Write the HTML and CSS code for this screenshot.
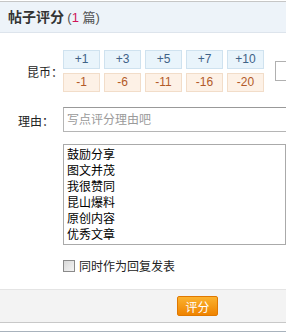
FILE: index.html
```html
<!DOCTYPE html>
<html lang="zh-CN">
<head>
    <meta charset="UTF-8">
    <title>帖子评分</title>
    <link rel="stylesheet" href="styles.css">
</head>
<body>
    <div class="dialog">
        <div class="hd">
            <b>帖子评分</b> <span class="count">(<em>1</em> 篇)</span>
        </div>
        <div class="bd">
            <div class="row row-score">
                <label class="lbl lbl-score">昆币：</label>
                <div class="scores">
                    <span class="sc plus">+1</span>
                    <span class="sc plus">+3</span>
                    <span class="sc plus">+5</span>
                    <span class="sc plus">+7</span>
                    <span class="sc plus">+10</span>
                    <span class="sc minus">-1</span>
                    <span class="sc minus">-6</span>
                    <span class="sc minus">-11</span>
                    <span class="sc minus">-16</span>
                    <span class="sc minus">-20</span>
                </div>
                <input type="text" class="custom">
            </div>
            <div class="row row-reason">
                <label class="lbl lbl-reason">理由：</label>
                <input type="text" class="reason" placeholder="写点评分理由吧">
            </div>
            <div class="row">
                <div class="reasons">
                    <div>鼓励分享</div>
                    <div>图文并茂</div>
                    <div>我很赞同</div>
                    <div>昆山爆料</div>
                    <div>原创内容</div>
                    <div>优秀文章</div>
                </div>
            </div>
            <div class="row row-check">
                <label class="check"><span class="box"></span>同时作为回复发表</label>
            </div>
        </div>
        <div class="ft">
            <button class="btn">评分</button>
        </div>
        <div class="bottom"></div>
    </div>
</body>
</html>
```

FILE: styles.css
```css
body {
    margin: 0;
    font-family: "Liberation Sans", "Noto Sans CJK SC", sans-serif;
    font-size: 12px;
    color: #000;
    background: #fff;
    overflow: hidden;
}
.dialog {
    padding-top: 1px;
    overflow: hidden;
}
.hd {
    height: 30px;
    line-height: 30px;
    padding-left: 8px;
    border-top: 1px solid #c6c6c6;
    border-bottom: 1px solid #dde4ec;
    background: #edf3f9;
    color: #333;
}
.hd b {
    font-size: 14px;
}
.count {
    font-size: 13px;
    color: #555;
}
.count em {
    font-style: normal;
    color: #d0145a;
}
.bd {
    padding: 17px 0 15px 63px;
}
.row {
    display: flex;
    align-items: center;
    position: relative;
}
.lbl {
    position: absolute;
    top: 50%;
    transform: translateY(-50%);
    color: #222;
}
.lbl-score {
    left: -36px;
}
.lbl-reason {
    left: -45px;
}
.scores {
    display: grid;
    flex-shrink: 0;
    grid-template-columns: repeat(5, 37px);
    grid-auto-rows: 19px;
    column-gap: 4px;
    row-gap: 4px;
}
.sc {
    box-sizing: border-box;
    text-align: center;
    line-height: 17px;
    font-size: 12px;
}
.plus {
    background: #e9f4fb;
    border: 1px solid #cfe2ef;
    color: #3f6286;
}
.minus {
    background: #fdf1e6;
    border: 1px solid #f2ddc9;
    color: #b25a28;
}
.custom {
    flex-shrink: 0;
    margin-left: 11px;
    width: 40px;
    height: 20px;
    box-sizing: border-box;
    border: 1px solid #b0b0b0;
    padding: 0;
}
.row-reason {
    margin-top: 15px;
}
.reason {
    flex-shrink: 0;
    width: 300px;
    height: 25px;
    box-sizing: border-box;
    border: 1px solid #b5b5b5;
    border-top-color: #999;
    padding: 0 3px;
    font-family: "Liberation Sans", "Noto Sans CJK SC", sans-serif;
    font-size: 12px;
}
.reason::placeholder {
    color: #9a9a9a;
}
.reasons {
    margin-top: 12px;
    width: 223px;
    height: 101px;
    box-sizing: border-box;
    border: 1px solid #aaa;
    padding: 2px 3px;
    line-height: 16px;
    overflow: hidden;
}
.row-check {
    margin-top: 12px;
}
.check {
    display: flex;
    align-items: center;
    gap: 4px;
    color: #222;
}
.box {
    width: 10px;
    height: 10px;
    border: 1px solid #8a8a8a;
    background: linear-gradient(135deg, #d8d8d8, #f4f4f4);
}
.ft {
    height: 32px;
    padding-left: 177px;
    display: flex;
    align-items: center;
    border-top: 1px solid #e4e4e4;
    border-bottom: 1px solid #c8c8c8;
    background: #f3f3f3;
}
.btn {
    width: 41px;
    height: 20px;
    padding: 0;
    border: 1px solid #e07800;
    border-radius: 2px;
    background: linear-gradient(#fbb22e, #ef8300);
    color: #fff;
    font-family: "Liberation Sans", "Noto Sans CJK SC", sans-serif;
    font-size: 12px;
}
.bottom {
    margin-top: 8px;
    border-top: 1px solid #a8b2bc;
}
```
